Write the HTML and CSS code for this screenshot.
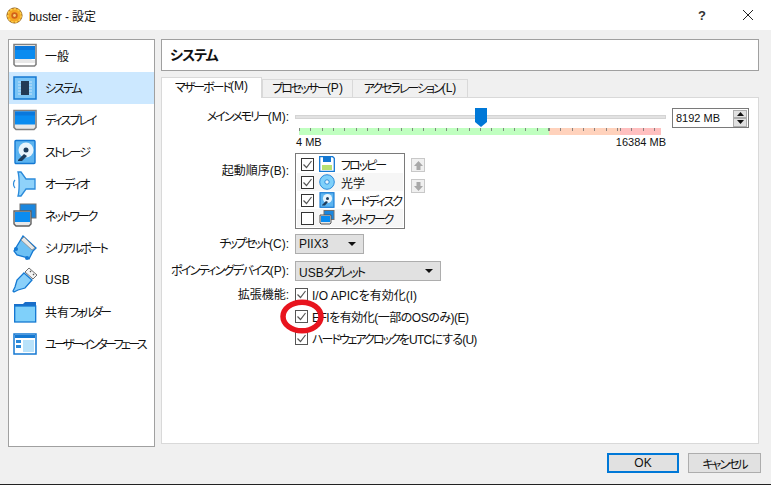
FILE: index.html
```html
<!DOCTYPE html>
<html lang="ja">
<head>
<meta charset="utf-8">
<title>buster - 設定</title>
<link rel="stylesheet" href="styles.css">
</head>
<body>
<div class="window">
  <header class="titlebar">
    <svg class="app-icon" width="17" height="17" viewBox="0 0 18 18"><circle cx="9" cy="9" r="8" fill="#f5a623" stroke="#8a5a1a" stroke-width="1"/><circle cx="9" cy="9" r="7" fill="none" stroke="#fbd050" stroke-width="1.600" stroke-dasharray="2.400 1.600"/><circle cx="9" cy="9" r="3.400" fill="#d2601a"/><circle cx="9" cy="9" r="1.500" fill="#f7d070"/></svg>
    <span class="title-text">buster - 設定</span>
    <span class="help">?</span>
    <svg class="close" width="12" height="12" viewBox="0 0 12 12"><path d="M1 1l10 10M11 1L1 11" stroke="#222" stroke-width="1" fill="none"/></svg>
  </header>

  <div class="content">
    <nav class="sidebar">
      <div class="item">
        <svg class="ico" width="26" height="26" viewBox="0 0 26 26"><path d="M2 1.500h22v20l-1.500 1.500h-19l-1.500-1.500z" fill="#fff" stroke="#808080" stroke-width="1.600"/><rect x="3" y="3" width="20" height="13" fill="#0a8cf0"/><rect x="3" y="3" width="20" height="4" fill="#0a78dc"/><path d="M3 20v-3h3l1-1h12l1 1h3v3" fill="#e8e8e8"/></svg>
        <span class="label">一般</span>
      </div>
      <div class="item selected">
        <svg class="ico" width="26" height="26" viewBox="0 0 26 26"><rect x="2" y="2" width="22" height="22" fill="#79c4f6" stroke="#1478d2" stroke-width="1.500"/><rect x="9" y="6" width="8" height="14" fill="#233a55"/><path d="M6 7h3M6 10h3M6 13h3M6 16h3M6 19h3M17 7h3M17 10h3M17 13h3M17 16h3M17 19h3" stroke="#c8e4fa" stroke-width="1.200"/></svg>
        <span class="label"><span class="nk">システム</span></span>
      </div>
      <div class="item">
        <svg class="ico" width="26" height="26" viewBox="0 0 26 26"><path d="M2 3.500h22v17l-2 2h-18l-2-2z" fill="#e8e8e8" stroke="#808080" stroke-width="1.600"/><rect x="3" y="4.500" width="20" height="13" fill="#0a8cf0"/><rect x="3" y="4.500" width="20" height="4" fill="#0a78dc"/></svg>
        <span class="label"><span class="nk">ディスプレイ</span></span>
      </div>
      <div class="item">
        <svg class="ico" width="26" height="26" viewBox="0 0 26 26"><rect x="3" y="1.500" width="20" height="23" rx="1" fill="#5cb4f0" stroke="#1478d2" stroke-width="1.400"/><circle cx="14" cy="11" r="7.500" fill="#e8f4fc"/><circle cx="14" cy="11" r="2.500" fill="#1d3c5c"/><path d="M6 21l6-6 3 2-5 5H6z" fill="#1d3c5c"/></svg>
        <span class="label"><span class="nk">ストレージ</span></span>
      </div>
      <div class="item">
        <svg class="ico" width="26" height="26" viewBox="0 0 26 26"><path d="M6 1h3l5 7h9v10h-9l-5 7H6c1.500-5 1.500-19 0-24z" fill="#8fd2fa" stroke="#2b8ada" stroke-width="1.300"/><path d="M3 9c-2 2-2 6 0 8" stroke="#2b8ada" stroke-width="1.200" fill="none"/></svg>
        <span class="label"><span class="nk">オーディオ</span></span>
      </div>
      <div class="item">
        <svg class="ico" width="26" height="26" viewBox="0 0 26 26"><rect x="8" y="1" width="16" height="14" fill="#1a86de" stroke="#707070"/><path d="M2 8h17v13l-2 2H4l-2-2z" fill="#e8e8e8" stroke="#606060" stroke-width="1.400"/><rect x="3" y="9" width="15" height="10" fill="#0a8cf0"/></svg>
        <span class="label"><span class="nk">ネットワーク</span></span>
      </div>
      <div class="item">
        <svg class="ico" width="26" height="26" viewBox="0 0 26 26"><path d="M11 1l13 12-3 3-4 8-4-2-8-2-3-4z" fill="#6cc0f4" stroke="#1478d2" stroke-width="1.300"/><path d="M12 2l11 11-3 2L9 5z" fill="#e8e8e8" stroke="#8a8a8a" stroke-width=".8"/><circle cx="4" cy="14" r="2" fill="#1478d2"/><circle cx="15" cy="23" r="2" fill="#1478d2"/></svg>
        <span class="label"><span class="nk">シリアルポート</span></span>
      </div>
      <div class="item">
        <svg class="ico" width="26" height="26" viewBox="0 0 26 26"><path d="M17 1l8 7-4 4-8-7z" fill="#f4f4f4" stroke="#707070"/><path d="M12 6l8 7-7 8-7 2-4 2-1-1 2-4 2-7z" fill="#8ad0fa" stroke="#1478d2" stroke-width="1.300"/><path d="M18 4l1 1M21 7l1 1" stroke="#555" stroke-width="1.200"/></svg>
        <span class="label">USB</span>
      </div>
      <div class="item">
        <svg class="ico" width="26" height="26" viewBox="0 0 26 26"><path d="M2 5h9l2-2h11v20H2z" fill="#1a6ec8"/><rect x="2.700" y="7" width="21" height="16" fill="#7fd0fa" stroke="#1478d2" stroke-width="1.300"/></svg>
        <span class="label">共有<span class="nk2">フォルダー</span></span>
      </div>
      <div class="item">
        <svg class="ico" width="26" height="26" viewBox="0 0 26 26"><rect x="2" y="3" width="22" height="20" fill="#fff" stroke="#1478d2" stroke-width="1.500"/><rect x="3" y="4" width="20" height="3" fill="#1478d2"/><rect x="11" y="9" width="11" height="12" fill="#b9e2fa"/><rect x="4" y="9" width="5" height="3" fill="#2a88d8"/><rect x="4" y="14" width="5" height="3" fill="#2a88d8"/></svg>
        <span class="label"><span class="nk2">ユーザーインターフェース</span></span>
      </div>
    </nav>

    <main class="main">
      <h1 class="page-title">システム</h1>
      <div class="tabs">
        <div class="tab active"><span class="nk">マザーボード</span>(M)</div>
        <div class="tab"><span class="nk">プロセッサー</span>(P)</div>
        <div class="tab"><span class="nk">アクセラレーション</span>(L)</div>
      </div>
      <section class="panel">
        <div class="row row-memory">
          <label class="field-label"><span class="nk">メインメモリー</span>(M):</label>
          <div class="memory">
            <div class="slider-box">
              <div class="track"></div>
              <svg class="thumb" width="12" height="19" viewBox="0 0 12 19"><path d="M0 0h12v14l-6 5-6-5z" fill="#0078d7"/></svg>
              <div class="ruler">
                <div class="seg seg-green"></div>
                <div class="seg seg-orange"></div>
                <div class="seg seg-red"></div>
              </div>
              <div class="scale"><span>4 MB</span><span>16384 MB</span></div>
            </div>
            <div class="spin">
              <span class="spin-value">8192 MB</span>
              <div class="spin-btns">
                <span class="spin-btn"><svg width="7" height="4" viewBox="0 0 7 4"><path d="M3.500 0L7 4H0z" fill="#111"/></svg></span>
                <span class="spin-btn"><svg width="7" height="4" viewBox="0 0 7 4"><path d="M0 0h7L3.500 4z" fill="#111"/></svg></span>
              </div>
            </div>
          </div>
        </div>

        <div class="row row-boot">
          <label class="field-label">起動順序(B):</label>
          <div class="boot">
            <ul class="boot-list">
              <li class="boot-item">
                <span class="check on"><svg width="11" height="11" viewBox="0 0 11 11"><path d="M1.500 5.500l3 3 5-6.500" stroke="#555" stroke-width="1.200" fill="none"/></svg></span>
                <svg class="boot-ico" width="16" height="16" viewBox="0 0 16 16"><path d="M.7.700h13l1.600 1.600v13H.7z" fill="#fff" stroke="#1478d2" stroke-width="1.300"/><rect x="4" y="1" width="8" height="5" fill="#1478d2"/><rect x="3" y="9" width="10" height="5" fill="#b8e070"/></svg>
                <span class="nk">フロッピー</span>
              </li>
              <li class="boot-item alt">
                <span class="check on"><svg width="11" height="11" viewBox="0 0 11 11"><path d="M1.500 5.500l3 3 5-6.500" stroke="#555" stroke-width="1.200" fill="none"/></svg></span>
                <svg class="boot-ico" width="16" height="16" viewBox="0 0 16 16"><circle cx="8" cy="8" r="7.300" fill="#7fd0fa" stroke="#2b8ada"/><circle cx="8" cy="8" r="2.200" fill="#eaf6fd" stroke="#1478d2" stroke-width=".8"/></svg>
                <span>光学</span>
              </li>
              <li class="boot-item">
                <span class="check on"><svg width="11" height="11" viewBox="0 0 11 11"><path d="M1.500 5.500l3 3 5-6.500" stroke="#555" stroke-width="1.200" fill="none"/></svg></span>
                <svg class="boot-ico" width="16" height="16" viewBox="0 0 16 16"><rect x="1" y=".7" width="14" height="14.600" fill="#5cb4f0" stroke="#1478d2" stroke-width="1.100"/><circle cx="8.500" cy="6.500" r="4.600" fill="#e8f4fc"/><circle cx="8.500" cy="6.500" r="1.500" fill="#1d3c5c"/><path d="M3 13l4-4 2 1-3 3.500H3z" fill="#1d3c5c"/></svg>
                <span class="nk">ハードディスク</span>
              </li>
              <li class="boot-item alt">
                <span class="check"></span>
                <svg class="boot-ico" width="16" height="16" viewBox="0 0 16 16"><rect x="5" y=".5" width="10" height="9" fill="#1a86de" stroke="#707070"/><path d="M1 5h11v8l-1 1H2l-1-1z" fill="#e8e8e8" stroke="#555"/><rect x="2" y="6" width="9" height="6" fill="#0a8cf0"/></svg>
                <span class="nk">ネットワーク</span>
              </li>
            </ul>
            <div class="order-btns">
              <span class="order-btn"><svg width="9" height="9" viewBox="0 0 9 9"><path d="M4.500 0L9 5H6.500v4h-4V5H0z" fill="#a8a8a8"/></svg></span>
              <span class="order-btn"><svg width="9" height="9" viewBox="0 0 9 9"><path d="M2.500 0h4v4H9L4.500 9 0 4h2.500z" fill="#a8a8a8"/></svg></span>
            </div>
          </div>
        </div>

        <div class="row row-chip">
          <label class="field-label"><span class="nk">チップセット</span>(C):</label>
          <div class="combo combo-short"><span>PIIX3</span><i class="caret"></i></div>
        </div>
        <div class="row row-point">
          <label class="field-label"><span class="nk3">ポインティングデバイス</span>(P):</label>
          <div class="combo combo-long"><span>USB<b class="nk plain">タブレット</b></span><i class="caret"></i></div>
        </div>

        <div class="row row-ext">
          <label class="field-label">拡張機能:</label>
          <div class="checks">
            <div class="check-row">
              <span class="check on"><svg width="11" height="11" viewBox="0 0 11 11"><path d="M1.500 5.500l3 3 5-6.500" stroke="#555" stroke-width="1.200" fill="none"/></svg></span>
              <span>I/O APICを有効化(I)</span>
            </div>
            <div class="check-row">
              <span class="check on"><svg width="11" height="11" viewBox="0 0 11 11"><path d="M1.500 5.500l3 3 5-6.500" stroke="#555" stroke-width="1.200" fill="none"/></svg></span>
              <span class="tight">EFIを有効化(一部のOSのみ)(E)</span>
            </div>
            <div class="check-row">
              <span class="check on"><svg width="11" height="11" viewBox="0 0 11 11"><path d="M1.500 5.500l3 3 5-6.500" stroke="#555" stroke-width="1.200" fill="none"/></svg></span>
              <span class="tighter"><span class="nk">ハードウェアクロック</span>をUTCにする(U)</span>
            </div>
            <svg class="annotation" width="44" height="35" viewBox="0 0 44 35"><ellipse cx="22" cy="17.500" rx="19" ry="14.300" fill="none" stroke="#e8141e" stroke-width="5.500"/></svg>
          </div>
        </div>
      </section>
    </main>
  </div>

  <footer class="footer">
    <button class="btn default">OK</button>
    <button class="btn"><span class="nk">キャンセル</span></button>
  </footer>
</div>
</body>
</html>
```

FILE: styles.css
```css
* { box-sizing: border-box; }
html, body { margin: 0; padding: 0; }
body {
  font-family: "Liberation Sans", "Noto Sans CJK JP", sans-serif;
  font-size: 12px;
  color: #111;
  font-feature-settings: "palt";
}
.window {
  width: 771px;
  height: 485px;
  background: #f0f0f0;
  display: flex;
  flex-direction: column;
  border-bottom: 1px solid #222;
  overflow: hidden;
}
.titlebar {
  height: 30px;
  background: #fff;
  display: flex;
  align-items: center;
  padding-left: 6px;
  flex: none;
}
.title-text { margin-left: 6px; font-size: 12px; letter-spacing: -.1px; }
.help { margin-left: auto; font-size: 13px; font-weight: bold; color: #333; width: 10px; }
.close { margin: 0 17px 0 34px; }

.content {
  flex: none;
  height: 417px;
  display: flex;
  padding: 9px 12px 0 8px;
  gap: 6px;
}
.sidebar {
  width: 147px;
  height: 408px;
  background: #fff;
  border: 1px solid #a0a0a0;
  flex: none;
}
.item {
  height: 32px;
  display: flex;
  align-items: center;
  padding-left: 3px;
  gap: 7px;
}
.item .ico { flex: none; width: 26px; height: 26px; }
.item .label { white-space: nowrap; margin-top: -1px; }
.selected { background: #cce8ff; }
.nk { letter-spacing: -2px; }
.nk2 { letter-spacing: -2.600px; }
.nk3 { letter-spacing: -1.700px; }
.plain { font-weight: normal; }
.tight { letter-spacing: -.5px; }
.tighter { letter-spacing: -.8px; }
.tighter .nk { letter-spacing: -2px; }

.main { flex: 1; min-width: 0; display: flex; flex-direction: column; }
.page-title {
  margin: 0;
  height: 32px;
  background: #fff;
  border: 1px solid #a0a0a0;
  font-size: 14px;
  font-weight: bold;
  line-height: 30px;
  padding-left: 8px;
  letter-spacing: -1px;
  flex: none;
}
.tabs { display: flex; height: 20px; margin-top: 6px; align-items: flex-end; flex: none; position: relative; z-index: 1; }
.tab {
  height: 18px;
  background: #f0f0f0;
  border: 1px solid #d9d9d9;
  border-bottom: none;
  display: flex;
  align-items: center;
  justify-content: center;
  white-space: nowrap;
  padding-bottom: 2px;
}
.tab:nth-child(1) { width: 101px; }
.tab:nth-child(2) { width: 91px; }
.tab:nth-child(3) { width: 116px; margin-left: -1px; }
.tab.active { background: #fff; border-color: #d9d9d9; margin-bottom: -1px; height: 21px; padding-bottom: 4px; }
.panel {
  height: 347px;
  background: #fff;
  border: 1px solid #d9d9d9;
  flex: none;
}
.row { display: grid; grid-template-columns: 127px 1fr; column-gap: 6px; }
.field-label { text-align: right; white-space: nowrap; line-height: 18px; justify-self: end; }

.row-memory { margin-top: 10px; height: 40px; }
.memory { display: flex; }
.slider-box { width: 371px; position: relative; height: 40px; }
.track { position: absolute; left: 0; right: 0; top: 7px; height: 4px; background: #e2e2e2; border: 1px solid #d4d4d4; }
.thumb { position: absolute; left: 180px; top: 0; }
.ruler { position: absolute; left: 4px; width: 362px; top: 20px; height: 7px; display: flex; }
.seg { height: 7px; background-image: repeating-linear-gradient(90deg, rgba(110,110,110,.8) 0 1px, transparent 1px 11.310px); background-size: 100% 3px; background-repeat: no-repeat; }
.seg-green { width: 250px; background-color: #c0ffc0; }
.seg-orange { width: 71px; background-color: #ffd2bc; }
.seg-red { width: 41px; background-color: #ffc0c0; }
.scale { position: absolute; left: 1px; right: 0; top: 27px; display: flex; justify-content: space-between; line-height: 14px; font-size: 11px; }
.spin {
  margin-left: 6px;
  width: 77px;
  height: 20px;
  border: 1px solid #7a7a7a;
  display: flex;
  align-items: center;
  padding-left: 3px;
  font-size: 11px;
  background: #fff;
}
.spin-value { flex: 1; }
.spin-btns { display: flex; flex-direction: column; margin-right: 1px; }
.spin-btn { width: 14px; height: 8.500px; background: #e1e1e1; border: 1px solid #adadad; display: flex; align-items: center; justify-content: center; }

.row-boot { margin-top: 5px; height: 76px; }
.row-boot .field-label { margin-top: 9px; }
.boot { display: flex; }
.boot-list { list-style: none; margin: 0; padding: 1px; width: 110px; height: 76px; border: 1px solid #7a7a7a; background: #fff; }
.boot-item { height: 18px; display: flex; align-items: center; padding-left: 4px; white-space: nowrap; }
.boot-item.alt { background: #f6f6f6; }
.boot-ico { margin: 0 6px 0 5px; flex: none; }
.check {
  width: 13px;
  height: 13px;
  border: 1px solid #333;
  background: #fff;
  display: inline-flex;
  align-items: center;
  justify-content: center;
  flex: none;
}
.order-btns { display: flex; flex-direction: column; gap: 7px; margin: 5px 0 0 6px; }
.order-btn { width: 14px; height: 14px; background: #f0f0f0; border: 1px solid #c8c8c8; display: flex; align-items: center; justify-content: center; }

.row-chip { margin-top: 5px; height: 20px; }
.row-point { margin-top: 7px; height: 20px; }
.row-chip .field-label, .row-point .field-label { line-height: 20px; }
.combo {
  height: 20px;
  background: #e1e1e1;
  border: 1px solid #adadad;
  display: flex;
  align-items: center;
  padding: 0 7px 0 3px;
}
.combo span { flex: 1; white-space: nowrap; }
.combo-short { width: 69px; }
.combo-long { width: 146px; }
.caret { width: 0; height: 0; border: 4px solid transparent; border-top: 4px solid #111; border-bottom: none; }

.row-ext { margin-top: 2px; }
.row-ext .field-label { line-height: 20px; margin-top: 2px; }
.checks { position: relative; }
.check-row { height: 22px; display: flex; align-items: center; gap: 4px; white-space: nowrap; }
.check-row .check { border-color: #555; }
.annotation { position: absolute; left: -15px; top: 16px; }

.footer { flex: 1; display: flex; justify-content: flex-end; align-items: flex-start; gap: 9px; padding: 6px 10px 0 0; }
.btn {
  width: 73px;
  height: 20px;
  padding: 0;
  font: inherit;
  color: #111;
  background: #e1e1e1;
  border: 1px solid #adadad;
  border-radius: 0;
}
.btn.default { width: 72px; border: 2px solid #0078d7; }
```
